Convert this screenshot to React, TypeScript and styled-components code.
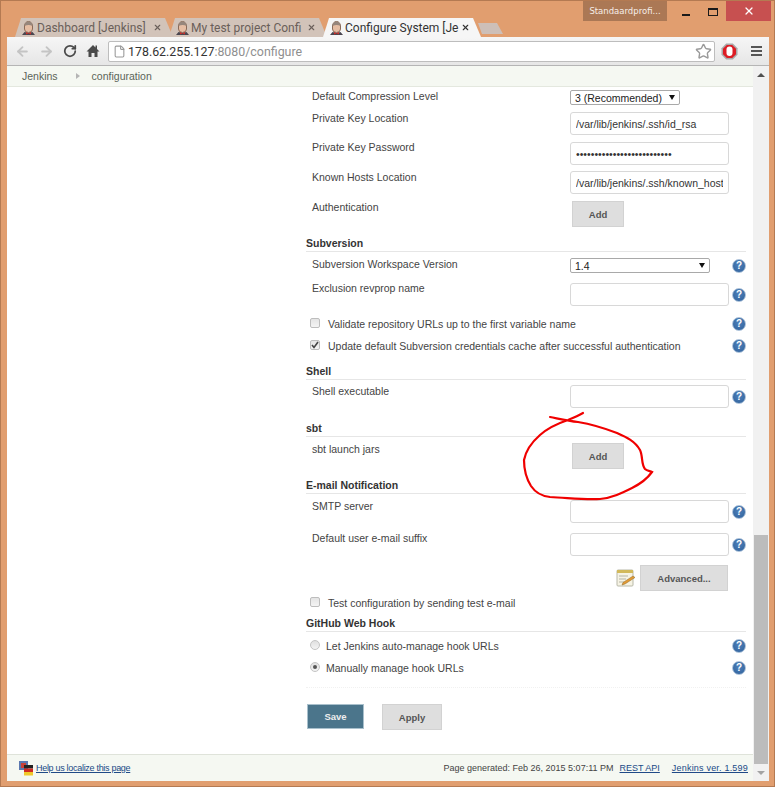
import React from "react";
import styled, { createGlobalStyle } from "styled-components";
import { ArrowLeft, ArrowRight, RotateCw, Star, File as FileIcon, X } from "lucide-react";

const GlobalStyle = createGlobalStyle`
  html, body {
    margin: 0;
    padding: 0;
    background: #e19e6f;
  }
  * {
    box-sizing: border-box;
  }
`;

const Win = styled.div`
  position: relative;
  width: 775px;
  height: 787px;
  overflow: hidden;
  background: #e19e6f;
  border: 1px solid #b47a52;
  padding: 0 5px 5px 6px;
  display: flex;
  flex-direction: column;
  font-family: "Liberation Sans", Arial, sans-serif;
  color: #333;
`;

const TitleBar = styled.div`
  height: 36px;
  flex: none;
  display: flex;
`;

const Tabs = styled.div`
  display: flex;
  align-items: flex-end;
  align-self: flex-end;
  padding-left: 8px;
`;

const Tab = styled.div<{ $active?: boolean }>`
  width: 158px;
  height: 19px;
  margin-right: -4px;
  padding: 0 11px 0 6px;
  display: flex;
  align-items: center;
  gap: 1px;
  clip-path: polygon(0 100%, 6px 0, calc(100% - 8px) 0, 100% 100%);
  background: ${(p) => (p.$active ? "#f6f6f6" : "#d2c3b9")};
  color: ${(p) => (p.$active ? "#333" : "#6a5f5a")};
  font-family: Roboto, sans-serif;
  font-size: 12px;
  white-space: nowrap;
`;

const TabTitle = styled.span`
  flex: 1;
`;

const NewTab = styled.div`
  width: 25px;
  height: 11px;
  margin: 0 0 3px 1px;
  background: #cdbfb8;
  clip-path: polygon(4px 100%, 0 0, 19px 0, 100% 100%);
`;

const Profile = styled.div`
  margin-left: auto;
  width: 84px;
  height: 20px;
  background: #ab7855;
  color: #f6eee8;
  font-family: "DejaVu Sans", sans-serif;
  font-size: 8.5px;
  display: flex;
  align-items: center;
  justify-content: center;
`;

const WinButtons = styled.div`
  display: flex;
  align-items: flex-start;
  margin-left: 14px;
  margin-right: -2px;
`;

const Minimize = styled.div`
  width: 8px;
  height: 2px;
  margin: 13px 18px 0 1px;
  background: #1a1a1a;
`;

const Maximize = styled.div`
  width: 10px;
  height: 8px;
  margin: 7px 8px 0 0;
  border: 1px solid #1a1a1a;
  border-top-width: 2px;
`;

const Close = styled.div`
  width: 45px;
  height: 20px;
  background: #c75050;
  color: #fff;
  display: flex;
  align-items: center;
  justify-content: center;
`;

const Browser = styled.div`
  flex: 1;
  min-height: 0;
  display: flex;
  flex-direction: column;
  background: #fff;
  border-radius: 2px 2px 0 0;
`;

const Toolbar = styled.div`
  height: 29px;
  flex: none;
  display: flex;
  align-items: center;
  padding: 0 6px 0 8px;
  background: linear-gradient(#f6f6f6, #e6e6e6);
  border-bottom: 1px solid #b5b5b5;
  color: #555;
`;

const NavButton = styled.div<{ $w: number; $ml?: number }>`
  width: ${(p) => p.$w}px;
  margin-left: ${(p) => p.$ml ?? 0}px;
  display: flex;
  flex: none;
  align-items: center;
`;

const Omnibox = styled.div`
  width: 607px;
  height: 21px;
  margin-left: 3px;
  padding: 0 2px 0 4px;
  display: flex;
  align-items: center;
  gap: 2px;
  background: #fff;
  border: 1px solid #bdbdbd;
  border-radius: 2px;
  font-family: Roboto, sans-serif;
  font-size: 12.4px;
  color: #333;
`;

const UrlRest = styled.span`
  color: #8f8f8f;
`;

const UrlText = styled.span`
  flex: 1;
`;

const MenuBars = styled.div`
  width: 11px;
  height: 10px;
  margin-left: 13px;
  border-top: 2px solid #555;
  border-bottom: 2px solid #555;
  display: flex;
  align-items: center;
  &::before {
    content: "";
    display: block;
    width: 100%;
    height: 2px;
    background: #555;
  }
`;

const Body = styled.div`
  flex: 1;
  min-height: 0;
  display: flex;
`;

const PageColumn = styled.div`
  flex: 1;
  min-width: 0;
  display: flex;
  flex-direction: column;
`;

const Breadcrumb = styled.div`
  height: 21px;
  flex: none;
  display: flex;
  align-items: center;
  padding-left: 15px;
  background: #f5f8f2;
  border-bottom: 1px solid #e4e8df;
  font-size: 10.5px;
  color: #5b6458;
`;

const CrumbArrow = styled.span`
  width: 0;
  height: 0;
  margin: 0 12px 0 18px;
  border-left: 4px solid #b5b5b5;
  border-top: 3px solid transparent;
  border-bottom: 3px solid transparent;
`;

const Content = styled.div`
  flex: 1;
  min-height: 0;
  padding: 3px 0 0 299px;
  width: 739px;
`;

const Row = styled.div<{ $h: number }>`
  height: ${(p) => p.$h}px;
  padding-left: 6px;
  display: flex;
  align-items: flex-start;
`;

const Label = styled.div<{ $up?: boolean }>`
  width: 258px;
  flex: none;
  margin-top: ${(p) => (p.$up ? -1 : 0)}px;
  font-size: 10.5px;
  line-height: 12px;
  color: #444;
`;

const Control = styled.div`
  width: 176px;
  display: flex;
  align-items: center;
  justify-content: space-between;
`;

const TextBox = styled.input`
  width: 159px;
  height: 23px;
  padding: 0 5px;
  border: 1px solid #d8d8d8;
  border-radius: 3px;
  background: #fff;
  outline: none;
  font-family: "Liberation Sans", Arial, sans-serif;
  font-size: 10.5px;
  color: #333;
`;

const Dropdown = styled.div<{ $w: number }>`
  width: ${(p) => p.$w}px;
  height: 15px;
  padding: 0 4px;
  display: flex;
  align-items: center;
  justify-content: space-between;
  background: #fff;
  border: 1px solid #a9a9a9;
  border-radius: 2px;
  font-size: 10.5px;
  color: #222;
  &::after {
    content: "";
    border-top: 5px solid #111;
    border-left: 3px solid transparent;
    border-right: 3px solid transparent;
  }
`;

const GreyButton = styled.button<{ $w: number; $h?: number }>`
  width: ${(p) => p.$w}px;
  height: ${(p) => p.$h ?? 26}px;
  flex: none;
  padding: 0;
  background: #dedede;
  border: 1px solid #d2d2d2;
  font-family: "Liberation Sans", Arial, sans-serif;
  font-size: 9.5px;
  font-weight: bold;
  color: #555;
`;

const AddSlot = styled.div`
  padding-left: 2px;
`;

const Help = styled.span`
  width: 14px;
  height: 14px;
  flex: none;
  border-radius: 50%;
  background: radial-gradient(circle at 50% 40%, #4f82bb, #2e5f99);
  border: 1px solid #a9c0d9;
  color: #fff;
  font-size: 10px;
  font-weight: bold;
  line-height: 12px;
  text-align: center;
`;

const SectionHead = styled.div<{ $mt?: number; $mb?: number }>`
  height: 16px;
  margin-top: ${(p) => p.$mt ?? 0}px;
  margin-bottom: ${(p) => p.$mb ?? 6}px;
  border-bottom: 1px solid #e6e6e6;
  font-size: 10.5px;
  font-weight: bold;
  line-height: 15px;
  color: #333;
`;

const CheckRow = styled.div`
  height: 22px;
  padding-left: 4px;
  display: flex;
  align-items: center;
  font-size: 10.5px;
  color: #444;
`;

const CheckText = styled.span`
  flex: 1;
`;

const CheckBox = styled.span<{ $checked?: boolean }>`
  width: 10px;
  height: 10px;
  margin-right: 8px;
  margin-top: -2px;
  flex: none;
  display: flex;
  align-items: center;
  justify-content: center;
  border: 1px solid #bdbdbd;
  border-radius: 2px;
  background: linear-gradient(#e4e4e4, #f4f4f4);
`;

const Radio = styled.span<{ $checked?: boolean }>`
  width: 10px;
  height: 10px;
  margin-right: 6px;
  margin-top: -3px;
  flex: none;
  display: flex;
  align-items: center;
  justify-content: center;
  border: 1px solid #c4c4c4;
  border-radius: 50%;
  background: linear-gradient(#e0e0e0, #f4f4f4);
  &::after {
    content: "";
    display: ${(p) => (p.$checked ? "block" : "none")};
    width: 4px;
    height: 4px;
    border-radius: 50%;
    background: #555;
  }
`;

const AdvancedRow = styled.div`
  height: 26px;
  width: 422px;
  margin-bottom: 1px;
  display: flex;
  justify-content: flex-end;
  align-items: center;
  gap: 4px;
`;

const ButtonBar = styled.div`
  margin-top: 8px;
  padding: 16px 0 0 1px;
  display: flex;
  gap: 18px;
  border-top: 1px dotted #f1f1f1;
`;

const SaveButton = styled.button`
  width: 57px;
  height: 25px;
  padding: 0;
  background: #4b758b;
  border: 1px solid #a9c0cc;
  font-family: "Liberation Sans", Arial, sans-serif;
  font-size: 9.5px;
  font-weight: bold;
  color: #eee;
`;

const Footer = styled.div`
  height: 27px;
  flex: none;
  display: flex;
  align-items: center;
  padding: 0 5px 0 12px;
  background: #f5f8f2;
  border-top: 1px solid #dfe3da;
  font-size: 9px;
  color: #444;
`;

const FooterLink = styled.a<{ $ml?: number; $track?: number }>`
  margin-left: ${(p) => p.$ml ?? 0}px;
  letter-spacing: ${(p) => p.$track ?? 0}px;
  color: #204a87;
  text-decoration: underline;
`;

const Generated = styled.span`
  margin-left: auto;
`;

const Scrollbar = styled.div`
  width: 16px;
  flex: none;
  display: flex;
  flex-direction: column;
  background: #f1f1f1;
`;

const ScrollArrow = styled.div<{ $down?: boolean }>`
  height: 17px;
  flex: none;
  display: flex;
  align-items: center;
  justify-content: center;
  &::after {
    content: "";
    border-left: 4px solid transparent;
    border-right: 4px solid transparent;
    ${(p) =>
      p.$down ? "border-top: 4px solid #a3a3a3;" : "border-bottom: 4px solid #505050;"}
  }
`;

const ScrollSpace = styled.div`
  flex: 1;
`;

const ScrollThumb = styled.div`
  height: 229px;
  flex: none;
  margin: 0 1px;
  background: #bcbcbc;
`;

const Scribble = styled.svg`
  position: absolute;
  left: -1px;
  top: -1px;
  pointer-events: none;
`;

const JenkinsFace = () => (
  <svg width="15" height="15" viewBox="0 0 15 15" style={{ flex: "none" }}>
    <path d="M3.500 6a4 4.500 0 0 1 8 0v3a4 3.500 0 0 1-8 0z" fill="#e6bda3" stroke="#8a6a58" />
    <path d="M3.500 6a4 4.500 0 0 1 8 0c-2-1.500-5.500-1.500-8 0z" fill="#96867c" />
    <path d="M1 15l2.500-3 4 1 4-1 2.500 3z" fill="#4a4650" />
    <path d="M5 12l2.500 1.200L10 12v2.500l-2.500-1-2.500 1z" fill="#c8322c" />
  </svg>
);

const HomeIcon = () => (
  <svg width="14" height="14" viewBox="0 0 14 14">
    <path d="M7 1L0.500 7.500h2v5.500h3v-4h3v4h3V7.500h2L11 5V1.500H9.500v2z" fill="#4a4a4a" />
  </svg>
);

const StopIcon = () => (
  <svg width="17" height="17" viewBox="0 0 17 17">
    <path d="M5.200.5h6.600l4.700 4.700v6.600l-4.700 4.700H5.200L.5 11.800V5.200z" fill="#a8a8a8" />
    <path d="M5.800 2h5.400L15 5.800v5.400L11.200 15H5.800L2 11.200V5.800z" fill="#dd1c24" />
    <path d="M5.500 8V6.500a3 3 0 0 1 6 0V10a3 3 0 0 1-6 0z" fill="#fff" />
  </svg>
);

const NotepadIcon = () => (
  <svg width="20" height="18" viewBox="0 0 20 18">
    <rect x="1" y="1" width="16" height="16" rx="1" fill="#f6f3e4" stroke="#b8b8a8" />
    <rect x="1" y="1" width="16" height="3" fill="#d2b95a" />
    <path d="M3 7h9M3 10h7M3 13h5" stroke="#b5b5a5" />
    <path d="M7 13.500L17 7l2 1.500-10 6.500-3 1z" fill="#e29a35" stroke="#8f6a2a" strokeWidth=".5" />
  </svg>
);

const FlagIcon = () => (
  <svg width="15" height="15" viewBox="0 0 15 15" style={{ flex: "none" }}>
    <rect x="0" y="0" width="9" height="9" fill="#5b78b0" />
    <rect x="2" y="2" width="5" height="5" fill="#c8413a" />
    <rect x="5" y="4" width="9" height="3.500" fill="#222" />
    <rect x="5" y="7.500" width="9" height="3.500" fill="#d02b22" />
    <rect x="5" y="11" width="9" height="3.500" fill="#f0c92a" />
  </svg>
);

const scribble =
  "M550 417C560 419 568 421 578 422C590 424 604 428 617 433C626 437 635 441 640 450C643 456 641 464 645 469C647 471 650 471 652 472C647 479 640 484 632 488C622 493 612 498 600 499C585 500 570 498 550 497C540 496 535 492 531 486C526 478 524 470 524 460C526 450 532 442 540 435C549 427 559 423 568 420C573 418 578 416 583 413";

const HelpMark = () => <Help>?</Help>;

const App: React.FC = () => {
  return (
    <>
      <GlobalStyle />
      <Win>
        <TitleBar>
          <Tabs>
            <Tab>
              <JenkinsFace />
              <TabTitle>Dashboard [Jenkins]</TabTitle>
              <X size={9} strokeWidth={3} />
            </Tab>
            <Tab>
              <JenkinsFace />
              <TabTitle>My test project Confi</TabTitle>
              <X size={9} strokeWidth={3} />
            </Tab>
            <Tab $active>
              <JenkinsFace />
              <TabTitle>Configure System [Je</TabTitle>
              <X size={9} strokeWidth={3} />
            </Tab>
            <NewTab />
          </Tabs>
          <Profile>Standaardprofi...</Profile>
          <WinButtons>
            <Minimize />
            <Maximize />
            <Close>
              <X size={12} strokeWidth={2.5} />
            </Close>
          </WinButtons>
        </TitleBar>
        <Browser>
          <Toolbar>
            <NavButton $w={24}>
              <ArrowLeft size={15} strokeWidth={3} color="#c4c4c4" />
            </NavButton>
            <NavButton $w={24}>
              <ArrowRight size={15} strokeWidth={3} color="#c4c4c4" />
            </NavButton>
            <NavButton $w={23}>
              <RotateCw size={14} strokeWidth={3} color="#4a4a4a" />
            </NavButton>
            <NavButton $w={19}>
              <HomeIcon />
            </NavButton>
            <Omnibox>
              <FileIcon size={13} color="#9a9a9a" />
              <UrlText>
                178.62.255.127<UrlRest>:8080/configure</UrlRest>
              </UrlText>
              <Star size={17} color="#9a9a9a" />
            </Omnibox>
            <NavButton $w={17} $ml={6}>
              <StopIcon />
            </NavButton>
            <MenuBars />
          </Toolbar>
          <Body>
            <PageColumn>
              <Breadcrumb>
                Jenkins
                <CrumbArrow />
                configuration
              </Breadcrumb>
              <Content>
                <Row $h={22}>
                  <Label>Default Compression Level</Label>
                  <Dropdown $w={110}>3 (Recommended)</Dropdown>
                </Row>
                <Row $h={30}>
                  <Label>Private Key Location</Label>
                  <TextBox readOnly value="/var/lib/jenkins/.ssh/id_rsa" />
                </Row>
                <Row $h={29}>
                  <Label $up>Private Key Password</Label>
                  <TextBox readOnly type="password" value="12345678901234567890123456" />
                </Row>
                <Row $h={30}>
                  <Label>Known Hosts Location</Label>
                  <TextBox readOnly value="/var/lib/jenkins/.ssh/known_hosts" />
                </Row>
                <Row $h={35}>
                  <Label>Authentication</Label>
                  <AddSlot>
                    <GreyButton $w={52}>Add</GreyButton>
                  </AddSlot>
                </Row>

                <SectionHead>Subversion</SectionHead>
                <Row $h={25}>
                  <Label>Subversion Workspace Version</Label>
                  <Control>
                    <Dropdown $w={140}>1.4</Dropdown>
                    <HelpMark />
                  </Control>
                </Row>
                <Row $h={30}>
                  <Label $up>Exclusion revprop name</Label>
                  <Control>
                    <TextBox readOnly value="" />
                    <HelpMark />
                  </Control>
                </Row>
                <CheckRow>
                  <CheckBox />
                  <CheckText>Validate repository URLs up to the first variable name</CheckText>
                  <HelpMark />
                </CheckRow>
                <CheckRow>
                  <CheckBox $checked>
                    <svg width="8" height="8" viewBox="0 0 8 8">
                      <path d="M1 4l2 2.500L7 1" fill="none" stroke="#444" strokeWidth="1.600" />
                    </svg>
                  </CheckBox>
                  <CheckText>
                    Update default Subversion credentials cache after successful authentication
                  </CheckText>
                  <HelpMark />
                </CheckRow>

                <SectionHead $mt={7} $mb={5}>
                  Shell
                </SectionHead>
                <Row $h={36}>
                  <Label>Shell executable</Label>
                  <Control>
                    <TextBox readOnly value="" />
                    <HelpMark />
                  </Control>
                </Row>

                <SectionHead>sbt</SectionHead>
                <Row $h={35}>
                  <Label>sbt launch jars</Label>
                  <AddSlot>
                    <GreyButton $w={52}>Add</GreyButton>
                  </AddSlot>
                </Row>

                <SectionHead>E-mail Notification</SectionHead>
                <Row $h={33}>
                  <Label>SMTP server</Label>
                  <Control>
                    <TextBox readOnly value="" />
                    <HelpMark />
                  </Control>
                </Row>
                <Row $h={32}>
                  <Label $up>Default user e-mail suffix</Label>
                  <Control>
                    <TextBox readOnly value="" />
                    <HelpMark />
                  </Control>
                </Row>
                <AdvancedRow>
                  <NotepadIcon />
                  <GreyButton $w={88}>Advanced...</GreyButton>
                </AdvancedRow>
                <CheckRow>
                  <CheckBox />
                  <CheckText>Test configuration by sending test e-mail</CheckText>
                </CheckRow>

                <SectionHead $mt={2} $mb={3}>
                  GitHub Web Hook
                </SectionHead>
                <CheckRow>
                  <Radio />
                  <CheckText>Let Jenkins auto-manage hook URLs</CheckText>
                  <HelpMark />
                </CheckRow>
                <CheckRow>
                  <Radio $checked />
                  <CheckText>Manually manage hook URLs</CheckText>
                  <HelpMark />
                </CheckRow>

                <ButtonBar>
                  <SaveButton>Save</SaveButton>
                  <GreyButton $w={60}>Apply</GreyButton>
                </ButtonBar>
              </Content>
              <Footer>
                <FlagIcon />
                <FooterLink href="#" $ml={2} $track={-0.3}>
                  Help us localize this page
                </FooterLink>
                <Generated>Page generated: Feb 26, 2015 5:07:11 PM</Generated>
                <FooterLink href="#" $ml={6}>
                  REST API
                </FooterLink>
                <FooterLink href="#" $ml={12} $track={0.2}>
                  Jenkins ver. 1.599
                </FooterLink>
              </Footer>
            </PageColumn>
            <Scrollbar>
              <ScrollArrow />
              <ScrollSpace />
              <ScrollThumb />
              <ScrollArrow $down />
            </Scrollbar>
          </Body>
        </Browser>
        <Scribble width="775" height="787" viewBox="0 0 775 787">
          <path d={scribble} fill="none" stroke="#f00000" strokeWidth="2.200" strokeLinecap="round" />
        </Scribble>
      </Win>
    </>
  );
};

export default App;
